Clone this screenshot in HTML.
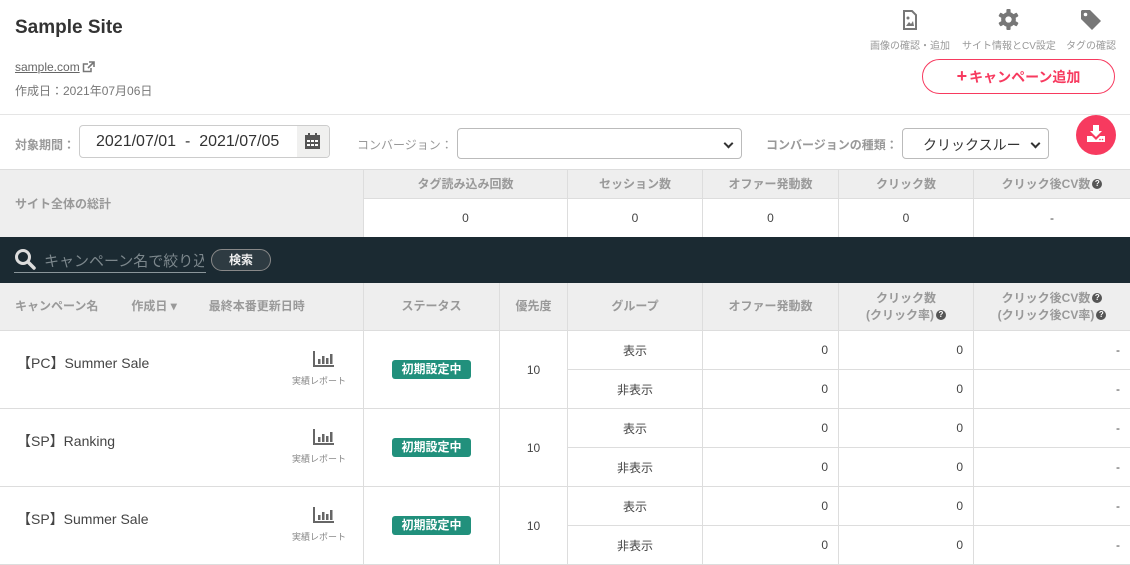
<!DOCTYPE html>
<html><head><meta charset="utf-8"><style>
*{box-sizing:border-box;margin:0;padding:0}
body{width:1130px;height:563px;overflow:hidden;background:#fff;font-family:"Liberation Sans","Noto Sans CJK JP",sans-serif;color:#333;position:relative}
.a{position:absolute}
.g{color:#999}
.hd{background:#eee;color:#999;font-size:12px;font-weight:bold;display:flex;align-items:center;justify-content:center;text-align:center;line-height:17px;white-space:nowrap}
.bl{border-left:1px solid #ddd}
.bb{border-bottom:1px solid #ddd}
.c{font-size:12px;display:flex;align-items:center;justify-content:center;color:#444}
.r{justify-content:flex-end;padding-right:10px}
.q{display:inline-block;width:10px;height:10px;border-radius:50%;background:#555;color:#fff;font-size:8px;line-height:10px;text-align:center;vertical-align:middle;margin-left:2px}
.sel{border:1px solid #bbb;border-radius:4px;height:32px}
.badge{background:#21907c;color:#fff;font-size:12px;font-weight:bold;border-radius:3px;padding:2px 9px;line-height:15px}
.car{position:absolute;right:9px;top:11px;width:7px;height:7px;border-right:2px solid #333;border-bottom:2px solid #333;transform:rotate(45deg)}
</style></head><body>
<div class="a" style="left:15px;top:17px;font-size:19px;font-weight:bold;color:#333">Sample Site</div>
<div class="a" style="left:15px;top:60px;font-size:12px;color:#666;text-decoration:underline">sample.com</div>
<svg class="a" style="left:82px;top:61px" width="13" height="12" viewBox="0 0 13 12"><path d="M9 7v3.5H1.5V3H6" fill="none" stroke="#777" stroke-width="1.5"/><path d="M7 1h5v5M12 1L6 7" fill="none" stroke="#777" stroke-width="1.6"/></svg>
<div class="a" style="left:15px;top:82px;font-size:12px;color:#777">作成日：2021年07月06日</div>

<svg class="a" style="left:902px;top:10px" width="16" height="20" viewBox="0 0 16 20"><path d="M2 1h8l4 4v14H2z" fill="none" stroke="#777" stroke-width="2"/><circle cx="6" cy="8" r="1.5" fill="#777"/><path d="M4 16l3-4 2 2 2-3 1 5z" fill="#777"/></svg>
<div class="a g" style="left:870px;top:37px;font-size:10px">画像の確認・追加</div>
<svg class="a" style="left:998px;top:9px" width="21" height="21" viewBox="0 0 20 20"><g fill="#777"><circle cx="10" cy="10" r="7"/><rect x="8" y="0" width="4" height="20" rx="1"/><rect x="8" y="0" width="4" height="20" rx="1" transform="rotate(60 10 10)"/><rect x="8" y="0" width="4" height="20" rx="1" transform="rotate(120 10 10)"/></g><circle cx="10" cy="10" r="3" fill="#fff"/></svg>
<div class="a g" style="left:962px;top:37px;font-size:10px">サイト情報とCV設定</div>
<svg class="a" style="left:1080px;top:9px" width="22" height="22" viewBox="0 0 22 22"><path d="M1 2v8l11 11 9-9L10 1H2z" fill="#777"/><circle cx="5.5" cy="5.5" r="1.8" fill="#fff"/></svg>
<div class="a g" style="left:1066px;top:37px;font-size:10px">タグの確認</div>
<div class="a" style="left:922px;top:59px;width:193px;height:35px;border:1px solid #f73a5f;border-radius:18px;color:#f73a5f;font-size:14px;font-weight:bold;display:flex;align-items:center;justify-content:center"><span style="font-size:18px;margin-right:2px">+</span>キャンペーン追加</div>
<div class="a" style="left:0;top:114px;width:1130px;border-top:1px solid #e5e5e5"></div>

<div class="a g" style="left:15px;top:136px;font-size:12px;font-weight:bold">対象期間：</div>
<div class="a sel" style="left:79px;top:125px;width:251px;height:33px;border-color:#ccc;overflow:hidden"><div class="a" style="left:16px;top:7px;font-size:16px;color:#333;white-space:pre">2021/07/01  -  2021/07/05</div><div class="a" style="right:0;top:0;width:32px;height:33px;background:#f0f0ef"><svg class="a" style="left:8px;top:7px" width="15" height="16" viewBox="0 0 15 16"><rect x="0" y="2" width="15" height="14" fill="#555"/><rect x="3" y="0" width="2" height="4" fill="#555"/><rect x="10" y="0" width="2" height="4" fill="#555"/><g fill="#fff"><rect x="2" y="7" width="3" height="2"/><rect x="6" y="7" width="3" height="2"/><rect x="10" y="7" width="3" height="2"/><rect x="2" y="11" width="3" height="2"/><rect x="6" y="11" width="3" height="2"/><rect x="10" y="11" width="3" height="2"/></g></svg></div></div>
<div class="a g" style="left:357px;top:136px;font-size:12px">コンバージョン：</div>
<div class="a sel" style="left:457px;top:128px;width:285px;height:31px"><div class="car"></div></div>
<div class="a g" style="left:766px;top:136px;font-size:12px;font-weight:bold">コンバージョンの種類：</div>
<div class="a sel" style="left:902px;top:128px;width:147px;height:31px"><div class="a" style="left:20px;top:6px;font-size:14px;color:#333">クリックスルー</div><div class="car"></div></div>
<div class="a" style="left:1076px;top:115px;width:40px;height:40px;border-radius:50%;background:#f73a5f"><svg class="a" style="left:10px;top:9px" width="20" height="20" viewBox="0 0 20 20"><path d="M7 1h6v6h3l-6 6-6-6h3z" fill="#fff"/><path d="M1 12h5l4 4 4-4h5v6H1z" fill="#fff"/><circle cx="14" cy="15.5" r=".8" fill="#f73a5f"/><circle cx="16.5" cy="15.5" r=".8" fill="#f73a5f"/></svg></div>

<div class="a" style="left:0;top:169px;width:1130px;border-top:1px solid #ddd"></div>
<div class="a hd" style="left:0;top:170px;width:363px;height:68px;justify-content:flex-start;padding-left:15px">サイト全体の総計</div>
<div class="a hd bl bb" style="left:363px;top:170px;width:204px;height:29px">タグ読み込み回数</div>
<div class="a hd bl bb" style="left:567px;top:170px;width:135px;height:29px">セッション数</div>
<div class="a hd bl bb" style="left:702px;top:170px;width:136px;height:29px">オファー発動数</div>
<div class="a hd bl bb" style="left:838px;top:170px;width:135px;height:29px">クリック数</div>
<div class="a hd bl bb" style="left:973px;top:170px;width:157px;height:29px"><div>クリック後CV数<span class="q">?</span></div></div>
<div class="a c bl" style="left:363px;top:199px;width:204px;height:38px">0</div>
<div class="a c bl" style="left:567px;top:199px;width:135px;height:38px">0</div>
<div class="a c bl" style="left:702px;top:199px;width:136px;height:38px">0</div>
<div class="a c bl" style="left:838px;top:199px;width:135px;height:38px">0</div>
<div class="a c bl" style="left:973px;top:199px;width:157px;height:38px">-</div>

<div class="a" style="left:0;top:237px;width:1130px;height:46px;background:#1b2a32"></div>
<svg class="a" style="left:14px;top:248px" width="22" height="22" viewBox="0 0 22 22"><circle cx="9" cy="9" r="6.5" fill="none" stroke="#ddd" stroke-width="3"/><path d="M14 14l6 6" stroke="#ddd" stroke-width="3.5" stroke-linecap="round"/></svg>
<div class="a" style="left:44px;top:250px;width:160px;overflow:hidden;white-space:nowrap;font-size:15px;color:#7c878c">キャンペーン名で絞り込</div>
<div class="a" style="left:14px;top:272px;width:192px;border-top:1px solid #8a959a"></div>
<div class="a" style="left:196px;top:249px;width:75px;height:22px;border:1px solid #888;border-radius:11px;background:#2e3b42;color:#eee;font-size:12px;font-weight:bold;text-align:center;line-height:20px;left:211px;width:60px">検索</div>

<div class="a hd bb" style="left:0;top:283px;width:363px;height:48px;justify-content:flex-start;padding-left:15px"><span>キャンペーン名</span><span style="margin-left:33px">作成日 ▾</span><span style="margin-left:32px">最終本番更新日時</span></div>
<div class="a hd bl bb" style="left:363px;top:283px;width:136px;height:48px">ステータス</div>
<div class="a hd bl bb" style="left:499px;top:283px;width:68px;height:48px">優先度</div>
<div class="a hd bl bb" style="left:567px;top:283px;width:135px;height:48px">グループ</div>
<div class="a hd bl bb" style="left:702px;top:283px;width:136px;height:48px">オファー発動数</div>
<div class="a hd bl bb" style="left:838px;top:283px;width:135px;height:48px"><div>クリック数<br>(クリック率)<span class="q">?</span></div></div>
<div class="a hd bl bb" style="left:973px;top:283px;width:157px;height:48px"><div>クリック後CV数<span class="q">?</span><br>(クリック後CV率)<span class="q">?</span></div></div>

<div id="rows"></div>
<script>
var names=["【PC】Summer Sale","【SP】Ranking","【SP】Summer Sale"],h="";
names.forEach(function(n,i){var t=331+i*78;
h+='<div class="a bb" style="left:0;top:'+t+'px;width:363px;height:78px"><div class="a" style="left:17px;top:22px;font-size:14px;color:#444">'+n+'</div>'+
'<svg class="a" style="left:313px;top:20px" width="22" height="16" viewBox="0 0 22 16"><path d="M1 0v15h20" fill="none" stroke="#666" stroke-width="2"/><rect x="5" y="8" width="2.5" height="5" fill="#666"/><rect x="9" y="5" width="2.5" height="8" fill="#666"/><rect x="13" y="7" width="2.5" height="6" fill="#666"/><rect x="17" y="3" width="2.5" height="10" fill="#666"/></svg>'+
'<div class="a" style="left:292px;top:43px;font-size:9px;color:#888">実績レポート</div></div>'+
'<div class="a c bl bb" style="left:363px;top:'+t+'px;width:136px;height:78px"><span class="badge">初期設定中</span></div>'+
'<div class="a c bl bb" style="left:499px;top:'+t+'px;width:68px;height:78px">10</div>';
["表示","非表示"].forEach(function(g,j){var s=t+j*39;
h+='<div class="a c bl bb" style="left:567px;top:'+s+'px;width:135px;height:39px">'+g+'</div>'+
'<div class="a c r bl bb" style="left:702px;top:'+s+'px;width:136px;height:39px">0</div>'+
'<div class="a c r bl bb" style="left:838px;top:'+s+'px;width:135px;height:39px">0</div>'+
'<div class="a c r bl bb" style="left:973px;top:'+s+'px;width:157px;height:39px">-</div>';});
});
document.getElementById("rows").innerHTML=h;
</script>
</body></html>
